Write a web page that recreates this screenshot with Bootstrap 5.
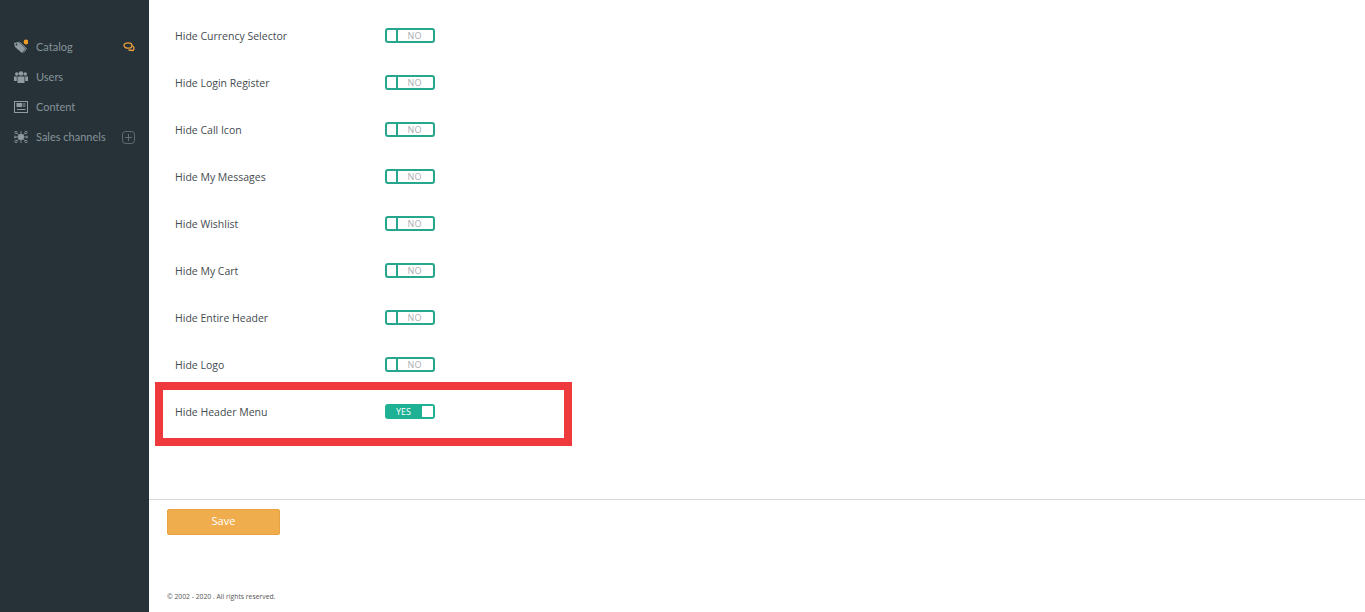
<!DOCTYPE html>
<html lang="en">
<head>
    <meta charset="UTF-8">
    <meta name="viewport" content="width=device-width, initial-scale=1.0">
    <title>Header Settings</title>
    <link href="https://cdn.jsdelivr.net/npm/bootstrap@5.3.2/dist/css/bootstrap.min.css" rel="stylesheet">
    <style>
        html, body { height: 612px; overflow: hidden; }
        body { font-family: "Open Sans", "Liberation Sans", sans-serif; background: #fff; color: #444b50; }
        .side-panel { width: 149px; height: 612px; background: #263238; padding-top: 32px; flex: none; }
        .side-item { height: 30px; padding: 0 14px; color: #869298; font-size: 11px; font-family: Lato, "Open Sans", sans-serif; }
        .side-item svg { flex: none; }
        .side-label { margin-left: 8px; }
        .main-panel { height: 612px; position: relative; }
        .settings-list { padding: 12px 0 0 26px; height: 499px; }
        .setting-row { height: 47px; font-size: 10.5px; }
        .setting-label { width: 210px; padding-top: 2px; }
        .toggle-box { width: 50px; height: 15px; border: 2px solid #26a68d; border-radius: 3px; font-size: 9px; line-height: 11px; color: #a9aeb1; }
        .toggle-knob { width: 11px; border-right: 2px solid #26a68d; flex: none; height: 100%; }
        .toggle-text { flex-grow: 1; text-align: center; padding-right: 2px; }
        .toggle-box.is-on { background: #1fb194; border-color: #1fb194; color: #fff; }
        .toggle-box.is-on .toggle-knob { background: #fff; border: 0; width: 11px; }
        .toggle-box.is-on .toggle-text { padding-right: 2px; }
        .red-mark { position: absolute; left: 6px; top: 382px; width: 417px; height: 64px; border: 8px solid #ee3a3c; }
        .save-area { border-top: 1px solid #d9d9d9; padding: 8px 0 0 18px; height: 80px; }
        .save-btn { width: 113px; height: 26px; background: #f0ad4e; border: 1px solid #e8a23e; color: #fff; font-size: 11px; padding: 0; border-radius: 2px; }
        .copy-line { padding-left: 18px; margin-top: 13px; font-size: 6.8px; color: #555; }
    </style>
</head>
<body>
    <div class="d-flex">
        <div class="side-panel">
            <div class="side-item d-flex align-items-center">
                <svg width="14" height="16" viewBox="0 0 14 16">
                    <path d="M0 4 4.500 3 11.500 9.500 8 14 1 8Z" fill="#8f9ba1"/>
                    <path d="M5.500 3 12.500 9.500 9.500 13.500" fill="none" stroke="#8f9ba1"/>
                    <circle cx="2.500" cy="5.500" r="0.900" fill="#263238"/>
                    <circle cx="12" cy="3" r="2.400" fill="#f39c24"/>
                </svg>
                <span class="side-label">Catalog</span>
                <svg class="ms-auto" width="12" height="10" viewBox="0 0 12 10"><ellipse cx="5" cy="3.500" rx="4" ry="2.700" fill="none" stroke="#ee9f3d" stroke-width="1.300"/><path d="M9 3.500C11.500 4.500 11.500 7 10 8.500L5.500 8" fill="none" stroke="#ee9f3d" stroke-width="1.300"/></svg>
            </div>
            <div class="side-item d-flex align-items-center">
                <svg width="14" height="14" viewBox="0 0 14 14" fill="#8f9ba1"><circle cx="2.800" cy="4" r="1.800"/><circle cx="11.200" cy="4" r="1.800"/><circle cx="7" cy="3.500" r="2.300"/><path d="M0 6.500h2.800v4.500H0zM11.200 6.500H14v4.500h-2.800z"/><path d="M3.500 6.500h7V13h-7z"/></svg>
                <span class="side-label">Users</span>
            </div>
            <div class="side-item d-flex align-items-center">
                <svg width="14" height="14" viewBox="0 0 14 14" fill="none" stroke="#8f9ba1"><rect x="0.500" y="1.500" width="13" height="11"/><rect x="3" y="3.500" width="4.500" height="3" fill="#8f9ba1"/><path d="M8.500 4h3M8.500 6h3M3 9.500h8.500"/></svg>
                <span class="side-label">Content</span>
            </div>
            <div class="side-item d-flex align-items-center">
                <svg width="14" height="14" viewBox="0 0 14 14" fill="none" stroke="#8f9ba1" stroke-width="0.800">
                    <path d="M2 2.500 12 11.500M12 2.500 2 11.500M1 7H13M7 1V13"/>
                    <circle cx="7" cy="7" r="2.800" fill="#8f9ba1"/>
                    <g fill="#263238"><circle cx="2" cy="2.500" r="1.200"/><circle cx="12" cy="2.500" r="1.200"/><circle cx="2" cy="11.500" r="1.200"/><circle cx="12" cy="11.500" r="1.200"/><circle cx="1" cy="7" r="1"/><circle cx="13" cy="7" r="1"/></g>
                </svg>
                <span class="side-label">Sales channels</span>
                <svg class="ms-auto" width="13" height="13" viewBox="0 0 13 13" fill="none" stroke="#5f6c72"><rect x="0.500" y="0.500" width="12" height="12" rx="3"/><path d="M6.500 3v7M3 6.500h7"/></svg>
            </div>
        </div>
        <div class="main-panel flex-grow-1">
            <div class="settings-list">
                <div class="setting-row d-flex align-items-center"><span class="setting-label">Hide Currency Selector</span><div class="toggle-box d-flex"><div class="toggle-knob"></div><div class="toggle-text">NO</div></div></div>
                <div class="setting-row d-flex align-items-center"><span class="setting-label">Hide Login Register</span><div class="toggle-box d-flex"><div class="toggle-knob"></div><div class="toggle-text">NO</div></div></div>
                <div class="setting-row d-flex align-items-center"><span class="setting-label">Hide Call Icon</span><div class="toggle-box d-flex"><div class="toggle-knob"></div><div class="toggle-text">NO</div></div></div>
                <div class="setting-row d-flex align-items-center"><span class="setting-label">Hide My Messages</span><div class="toggle-box d-flex"><div class="toggle-knob"></div><div class="toggle-text">NO</div></div></div>
                <div class="setting-row d-flex align-items-center"><span class="setting-label">Hide Wishlist</span><div class="toggle-box d-flex"><div class="toggle-knob"></div><div class="toggle-text">NO</div></div></div>
                <div class="setting-row d-flex align-items-center"><span class="setting-label">Hide My Cart</span><div class="toggle-box d-flex"><div class="toggle-knob"></div><div class="toggle-text">NO</div></div></div>
                <div class="setting-row d-flex align-items-center"><span class="setting-label">Hide Entire Header</span><div class="toggle-box d-flex"><div class="toggle-knob"></div><div class="toggle-text">NO</div></div></div>
                <div class="setting-row d-flex align-items-center"><span class="setting-label">Hide Logo</span><div class="toggle-box d-flex"><div class="toggle-knob"></div><div class="toggle-text">NO</div></div></div>
                <div class="setting-row d-flex align-items-center"><span class="setting-label">Hide Header Menu</span><div class="toggle-box is-on d-flex"><div class="toggle-text">YES</div><div class="toggle-knob"></div></div></div>
            </div>
            <div class="red-mark"></div>
            <div class="save-area">
                <button type="button" class="btn save-btn">Save</button>
            </div>
            <div class="copy-line">© 2002 - 2020 . All rights reserved.</div>
        </div>
    </div>
    <script src="https://cdn.jsdelivr.net/npm/bootstrap@5.3.2/dist/js/bootstrap.bundle.min.js"></script>
</body>
</html>
